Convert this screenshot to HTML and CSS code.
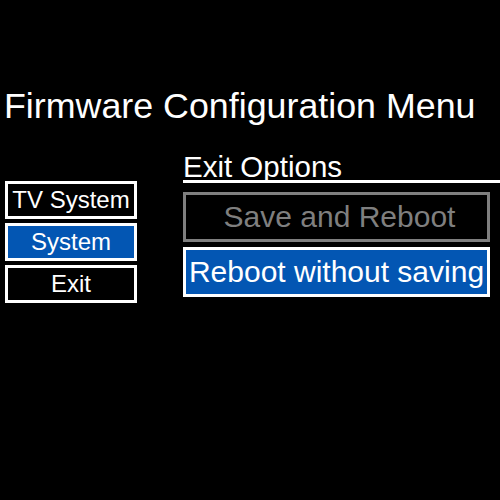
FILE: index.html
```html
<!DOCTYPE html>
<html>
<head>
<meta charset="utf-8">
<link rel="stylesheet" href="styles.css">
</head>
<body>
<h1 class="title">Firmware Configuration Menu</h1>
<div class="row">
  <div class="nav">
    <div class="nav-item">TV System</div>
    <div class="nav-item active">System</div>
    <div class="nav-item">Exit</div>
  </div>
  <div class="panel">
    <div class="panel-title">Exit Options</div>
    <div class="option disabled">Save and Reboot</div>
    <div class="option selected">Reboot without saving</div>
  </div>
</div>
</body>
</html>
```
FILE: styles.css
```css
html, body {
  margin: 0;
  padding: 0;
  background: #000;
  width: 500px;
  height: 500px;
  overflow: hidden;
}
body {
  font-family: "Liberation Sans", Arial, sans-serif;
  color: #fff;
}
.title {
  margin: 85px 0 0 4px;
  font-size: 35.8px;
  font-weight: normal;
  line-height: 42px;
  white-space: nowrap;
}
.row {
  display: flex;
  align-items: flex-start;
  margin-top: 27px;
}
.nav {
  display: flex;
  flex-direction: column;
  gap: 4px;
  margin: 27px 0 0 5px;
  width: 132px;
}
.nav-item {
  box-sizing: border-box;
  height: 38px;
  border: 3px solid #fff;
  font-size: 24px;
  line-height: 32px;
  text-align: center;
  white-space: nowrap;
}
.nav-item.active {
  background: #0356b3;
}
.panel {
  flex: 1;
  margin-left: 46px;
  display: flex;
  flex-direction: column;
}
.panel-title {
  font-size: 29.5px;
  line-height: 26px;
  border-bottom: 3px solid #fff;
  margin-bottom: 9px;
  white-space: nowrap;
}
.option {
  box-sizing: border-box;
  height: 50px;
  margin-right: 10px;
  margin-bottom: 5px;
  border: 3px solid #fff;
  font-size: 30px;
  line-height: 44px;
  text-align: center;
  white-space: nowrap;
}
.option.disabled {
  border-color: #7f7f7f;
  color: #7f7f7f;
  padding-left: 6px;
}
.option.selected {
  background: #0356b3;
}
```
